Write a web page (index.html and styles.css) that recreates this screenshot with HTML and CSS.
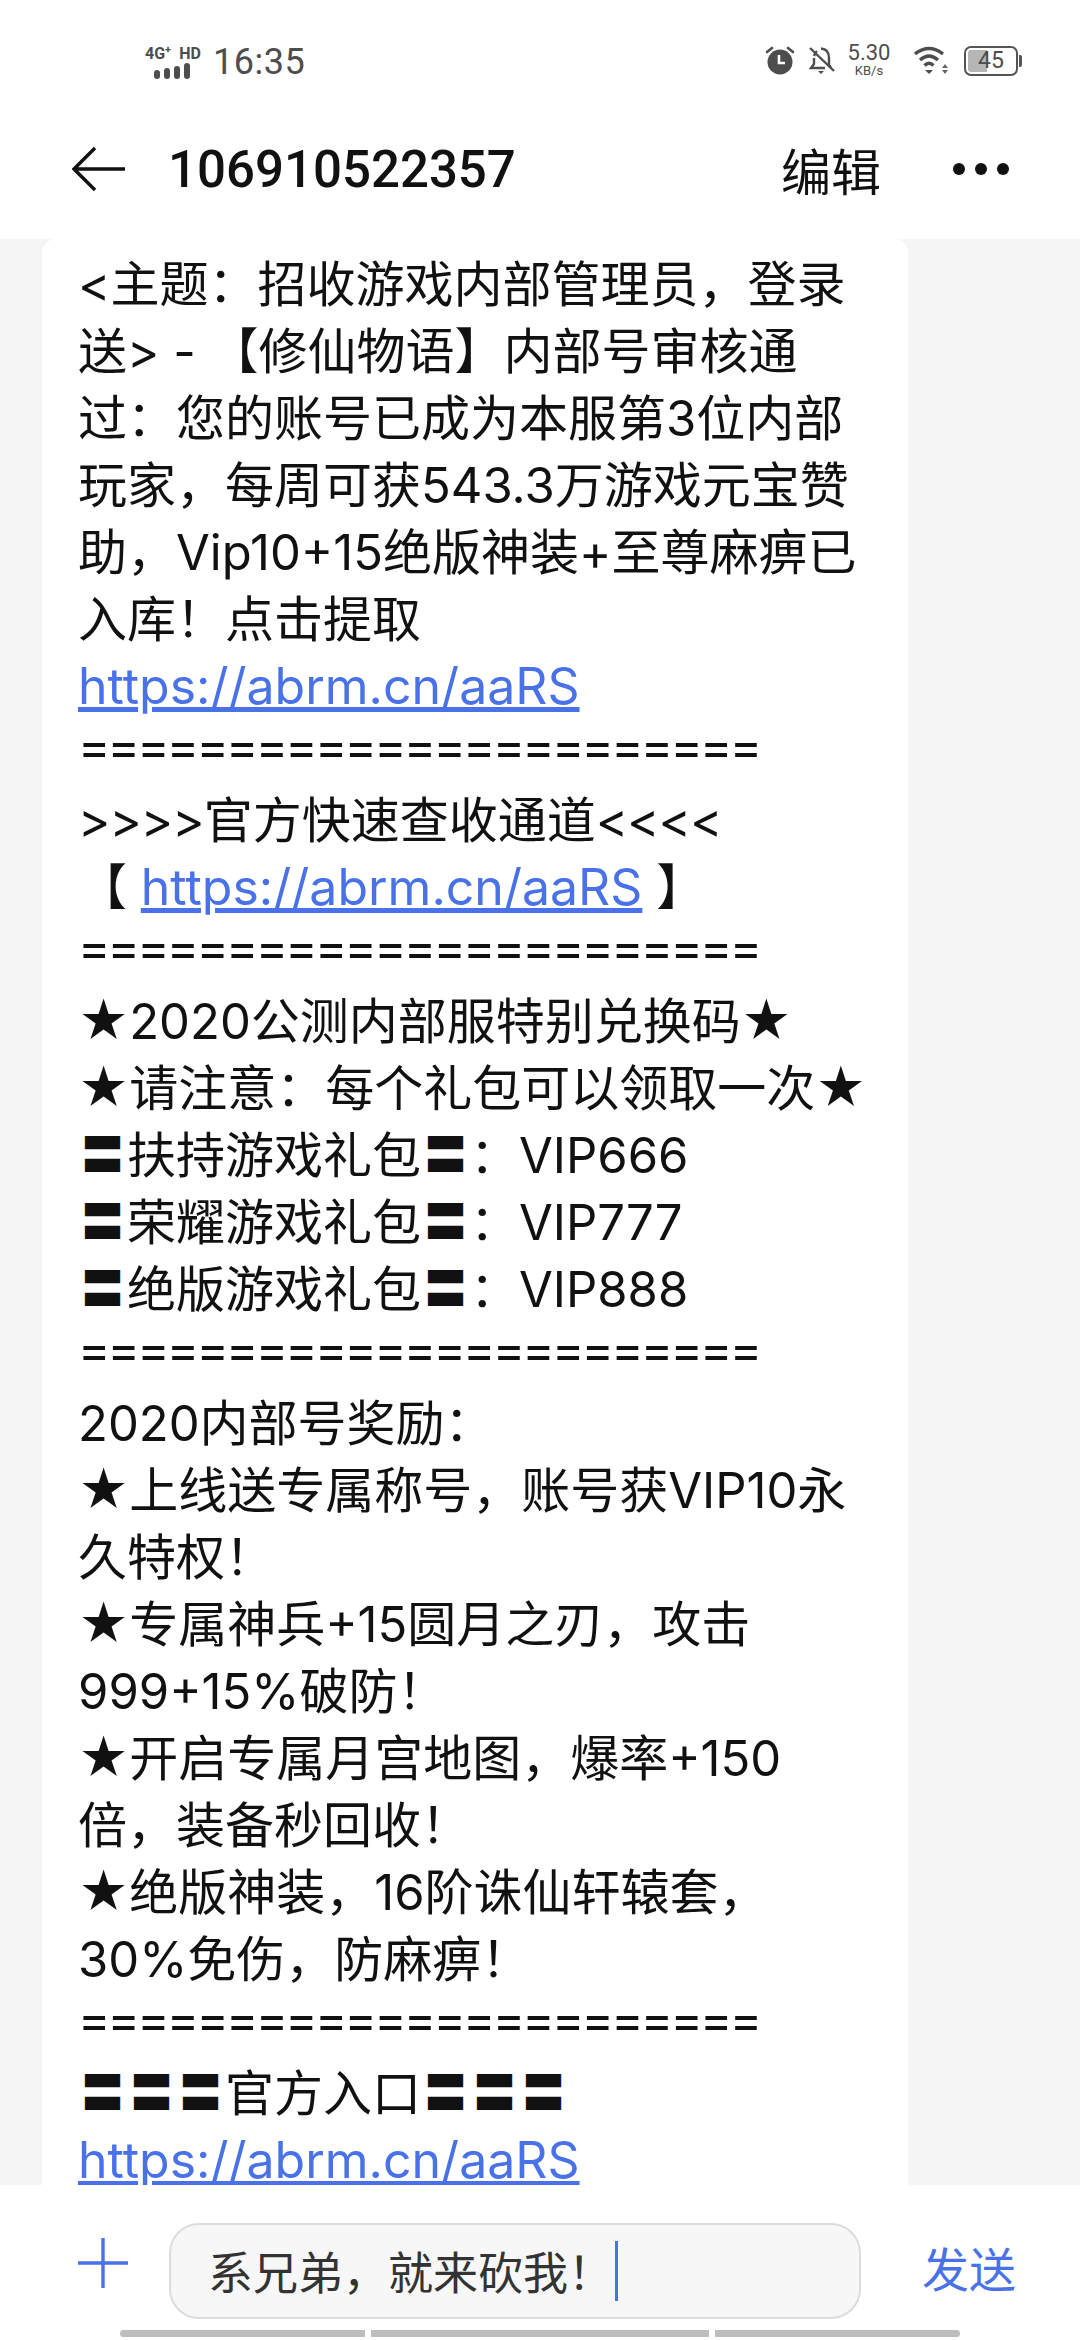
FILE: index.html
```html
<!DOCTYPE html>
<html>
<head>
  <meta charset="UTF-8">
  <title>106910522357</title>
  <link rel="stylesheet" href="styles.css">
</head>
<body>
  <div class="phone">
    <div class="status-bar">
      <div class="status-left">
        <div class="signal">
          <div class="net"><span>4G<sup>+</sup></span><span>HD</span></div>
          <div class="bars"><i class="b1"></i><i class="b2"></i><i class="b3"></i><i class="b4"></i></div>
        </div>
        <span class="time">16:35</span>
      </div>
      <div class="status-right">
        <svg class="ic-alarm" width="30" height="29" viewBox="0 0 30 29">
          <circle cx="15" cy="16" r="12.5" fill="#4d4d4d"/>
          <path d="M2 6 L7 2 M28 6 L23 2" stroke="#4d4d4d" stroke-width="2.6" stroke-linecap="round"/>
          <path d="M14 9 V17 H20" stroke="#fff" stroke-width="2.6" fill="none"/>
        </svg>
        <svg class="ic-bell" width="27" height="29" viewBox="0 0 27 29">
          <path d="M6 10 Q7 7 9 5 M13 2.500 Q21 3 21 12 V19 L23 22 M17 22 H3 L6 18 V12" fill="none" stroke="#4d4d4d" stroke-width="2.400"/>
          <path d="M2 2 L26 25" stroke="#4d4d4d" stroke-width="2.400"/>
          <path d="M10 25 H16 L13 28 Z" fill="#4d4d4d"/>
        </svg>
        <div class="speed"><b>5.30</b><small>KB/s</small></div>
        <svg class="ic-wifi" width="37" height="30" viewBox="0 0 37 30">
          <path d="M1 8 Q15 -3 29 8" fill="none" stroke="#4d4d4d" stroke-width="3.400"/>
          <path d="M6 14 Q15 6 24 14" fill="none" stroke="#4d4d4d" stroke-width="3.400"/>
          <path d="M10.500 19.500 Q15 15 19.500 19.500" fill="none" stroke="#4d4d4d" stroke-width="3.400"/>
          <path d="M11 24 H19 L15 28 Z" fill="#4d4d4d"/>
          <path d="M31 18 L34 22 H28 Z M28 24 H34 L31 28 Z" fill="#666"/>
        </svg>
        <div class="battery"><div class="level"></div><span>45</span></div>
      </div>
    </div>

    <div class="title-bar">
      <svg class="back" width="54" height="46" viewBox="0 0 54 46">
        <path d="M23 2 L2 23 L23 44 M2 23 H53" fill="none" stroke="#111" stroke-width="3.400"/>
      </svg>
      <h1>106910522357</h1>
      <span class="edit">编辑</span>
      <div class="more"><i></i><i></i><i></i></div>
    </div>

    <div class="messages">
      <div class="bubble">
        &lt;主题：招收游戏内部管理员，登录<br>
        送&gt; - 【修仙物语】内部号审核通<br>
        过：您的账号已成为本服第3位内部<br>
        玩家，每周可获543.3万游戏元宝赞<br>
        助，Vip10+15绝版神装+至尊麻痹已<br>
        入库！点击提取<br>
        <a href="#">https://abrm.cn/aaRS</a><br>
        <span class="rule">=======================</span><br>
        <span class="arrows">&gt;&gt;&gt;&gt;</span>官方快速查收通道<span class="arrows">&lt;&lt;&lt;&lt;</span><br>
        【 <a href="#">https://abrm.cn/aaRS</a> 】<br>
        <span class="rule">=======================</span><br>
        ★2020公测内部服特别兑换码★<br>
        ★请注意：每个礼包可以领取一次★<br>
        <span class="geta">〓</span>扶持游戏礼包<span class="geta">〓</span>：VIP666<br>
        <span class="geta">〓</span>荣耀游戏礼包<span class="geta">〓</span>：VIP777<br>
        <span class="geta">〓</span>绝版游戏礼包<span class="geta">〓</span>：VIP888<br>
        <span class="rule">=======================</span><br>
        2020内部号奖励：<br>
        ★上线送专属称号，账号获VIP10永<br>
        久特权！<br>
        ★专属神兵+15圆月之刃，攻击<br>
        999+15%破防！<br>
        ★开启专属月宫地图，爆率+150<br>
        倍，装备秒回收！<br>
        ★绝版神装，16阶诛仙轩辕套，<br>
        30%免伤，防麻痹！<br>
        <span class="rule">=======================</span><br>
        <span class="geta">〓</span><span class="geta">〓</span><span class="geta">〓</span>官方入口<span class="geta">〓</span><span class="geta">〓</span><span class="geta">〓</span><br>
        <a href="#">https://abrm.cn/aaRS</a>
      </div>
    </div>

    <div class="composer">
      <svg class="plus" width="50" height="50" viewBox="0 0 50 50">
        <path d="M25 0 V50 M0 25 H50" stroke="#4a72e8" stroke-width="3.400"/>
      </svg>
      <div class="input"><span>系兄弟，就来砍我！</span><i class="caret"></i></div>
      <span class="send">发送</span>
    </div>

    <div class="nav-hint"><i class="n1"></i><i class="n2"></i><i class="n3"></i></div>
  </div>
</body>
</html>
```

FILE: styles.css
```css
html, body {
  margin: 0;
  padding: 0;
}

body {
  font-family: Roboto, "Noto Sans CJK SC", sans-serif;
  background-color: #fff;
  color: #111;
}

.phone {
  width: 1080px;
  height: 2340px;
  display: flex;
  flex-direction: column;
  overflow: hidden;
}

.status-bar {
  height: 100px;
  flex: none;
  display: flex;
  justify-content: space-between;
  align-items: flex-start;
  padding: 44px 62px 0 145px;
  box-sizing: border-box;
  color: #4d4d4d;
}

.status-left, .status-right {
  display: flex;
  align-items: center;
}

.signal {
  width: 56px;
  margin-right: 12px;
}

.net {
  display: flex;
  justify-content: space-between;
  font-size: 16px;
  font-weight: 700;
  line-height: 15px;
}

.net sup {
  font-size: 11px;
  line-height: 0;
}

.bars {
  display: flex;
  align-items: flex-end;
  gap: 4px;
  margin: 2px 0 0 9px;
}

.bars i {
  display: block;
  width: 6px;
  background-color: #4d4d4d;
  border-radius: 3px;
}

.bars .b1 { height: 9px; }
.bars .b2 { height: 11px; }
.bars .b3 { height: 13px; }
.bars .b4 { height: 16px; }

.time {
  font-size: 36px;
  line-height: 36px;
  letter-spacing: 0.5px;
}

.ic-bell {
  margin-left: 13px;
}

.speed {
  width: 52px;
  margin: -2px 0 0 8px;
  text-align: center;
}

.speed b {
  display: block;
  font-size: 22px;
  font-weight: 400;
  line-height: 22px;
}

.speed small {
  display: block;
  font-size: 13px;
  line-height: 13px;
}

.ic-wifi {
  margin-left: 19px;
}

.battery {
  position: relative;
  width: 54px;
  height: 30px;
  margin-left: 13px;
  border: 2px solid #555;
  border-radius: 7px;
  box-sizing: border-box;
  font-size: 23px;
  line-height: 26px;
  text-align: center;
}

.battery:after {
  content: "";
  position: absolute;
  right: -6px;
  top: 7px;
  width: 3px;
  height: 12px;
  background-color: #555;
  border-radius: 0 2px 2px 0;
}

.battery .level {
  position: absolute;
  left: 2px;
  top: 2px;
  bottom: 2px;
  width: 19px;
  background-color: #b5b5b5;
  border-radius: 3px 0 0 3px;
}

.battery span {
  position: relative;
}

.title-bar {
  height: 139px;
  flex: none;
  display: flex;
  align-items: center;
  padding: 0 71px 1px 72px;
  box-sizing: border-box;
}

.back {
  flex: none;
}

.title-bar h1 {
  flex: 1;
  margin: 0 0 0 42px;
  font-size: 51px;
  font-weight: 500;
}

.edit {
  font-size: 50px;
  margin-right: 72px;
}

.more {
  display: flex;
  gap: 10px;
}

.more i {
  display: block;
  width: 12px;
  height: 12px;
  background-color: #111;
  border-radius: 50%;
}

.messages {
  flex: 1;
  min-height: 0;
  overflow: hidden;
  background-color: #f5f5f5;
  padding-left: 42px;
}

.bubble {
  width: 866px;
  box-sizing: border-box;
  padding: 12px 0 40px 36px;
  background-color: #fff;
  border-radius: 14px;
  font-family: Inter, "Noto Sans CJK SC", sans-serif;
  font-size: 49px;
  line-height: 67px;
  white-space: nowrap;
  color: #111;
}

.bubble a {
  font-size: 50px;
  color: #4a72e8;
}

.rule {
  letter-spacing: -2.8px;
  line-height: 1;
  vertical-align: 7px;
}

.arrows {
  letter-spacing: -1px;
}

/* the glyph is full width in Noto, the reference one is narrower */
.geta {
  display: inline-block;
  width: 49px;
  font-size: 44px;
  line-height: 1;
  text-align: center;
  vertical-align: 2px;
}

.composer {
  height: 145px;
  flex: none;
  display: flex;
  align-items: center;
  padding: 10px 64px 0 78px;
  box-sizing: border-box;
  position: relative;
}

.plus {
  flex: none;
  margin: 0 41px 0 0;
}

.input {
  flex: none;
  width: 692px;
  height: 96px;
  margin-top: 16px;
  box-sizing: border-box;
  display: flex;
  align-items: center;
  padding-left: 37px;
  background-color: #f7f7f7;
  border: 2px solid #dcdcdc;
  border-radius: 30px;
  font-size: 45px;
  color: #333;
}

.caret {
  display: block;
  width: 3px;
  height: 60px;
  margin-left: 2px;
  background-color: #4a72e8;
}

.send {
  margin: 8px 0 0 auto;
  font-size: 47px;
  color: #4a72e8;
}

.nav-hint {
  height: 10px;
  flex: none;
  display: flex;
  gap: 6px;
  padding-left: 120px;
}

.nav-hint i {
  display: block;
  height: 7px;
  background-color: #bdbdbd;
}

.nav-hint .n1 { width: 245px; border-radius: 4px 0 0 4px; }
.nav-hint .n2 { width: 338px; }
.nav-hint .n3 { width: 245px; border-radius: 0 4px 4px 0; }
```
